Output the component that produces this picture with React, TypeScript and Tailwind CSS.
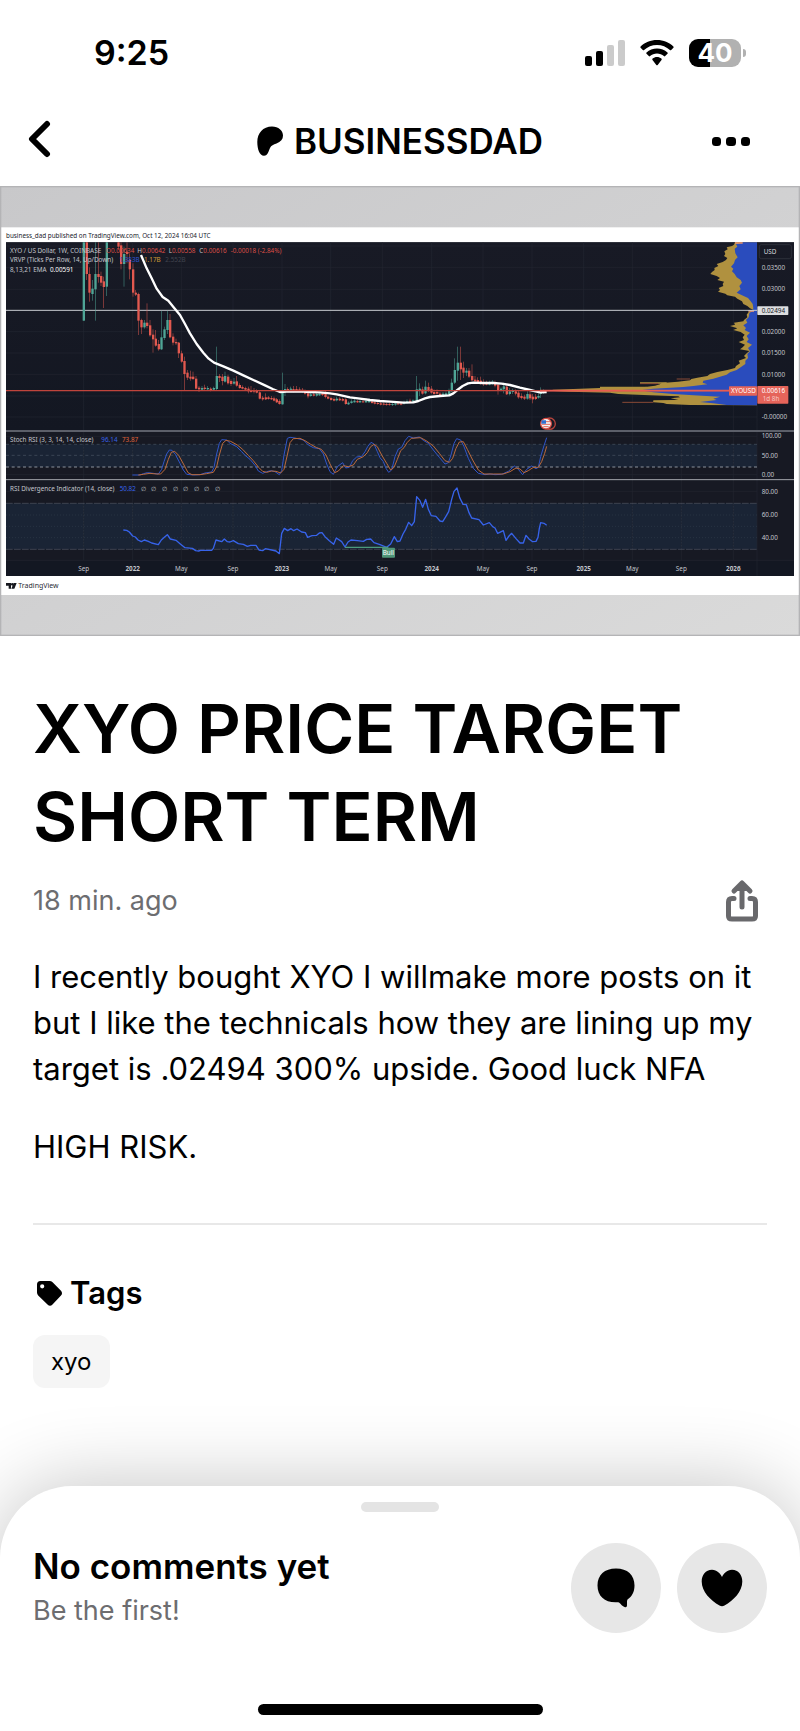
import React from "react";

type Point = [number, number];
// x, wick top, body top, body bottom, wick bottom, closed up
type Candle = [number, number, number, number, number, 0 | 1];

const candles: Candle[] = [
  [251, 187, 187, 422, 422, 1],
  [260, 187, 187, 282, 300, 0],
  [268, 262, 282, 338, 365, 0],
  [277, 300, 326, 342, 362, 1],
  [286, 187, 282, 328, 422, 1],
  [295, 187, 282, 291, 308, 0],
  [303, 275, 288, 308, 318, 0],
  [311, 290, 304, 321, 384, 0],
  [320, 187, 187, 320, 348, 1],
  [355, 187, 187, 200, 210, 0],
  [363, 187, 196, 252, 268, 0],
  [372, 200, 222, 252, 320, 1],
  [381, 187, 215, 222, 250, 0],
  [389, 220, 240, 268, 298, 0],
  [399, 250, 268, 338, 350, 0],
  [407, 330, 338, 344, 348, 0],
  [415, 338, 342, 422, 465, 0],
  [424, 416, 420, 442, 462, 0],
  [433, 420, 428, 442, 446, 1],
  [441, 370, 428, 438, 445, 0],
  [450, 420, 436, 466, 470, 0],
  [459, 448, 464, 478, 518, 0],
  [467, 450, 476, 497, 500, 0],
  [476, 480, 492, 508, 512, 0],
  [484, 392, 472, 508, 510, 1],
  [493, 440, 448, 474, 480, 1],
  [502, 392, 420, 450, 462, 1],
  [510, 402, 420, 472, 475, 0],
  [519, 460, 470, 488, 496, 0],
  [528, 476, 486, 490, 495, 0],
  [536, 486, 488, 520, 534, 0],
  [545, 512, 520, 545, 548, 0],
  [553, 530, 543, 582, 630, 0],
  [562, 570, 578, 593, 600, 0],
  [571, 572, 590, 596, 602, 0],
  [579, 575, 590, 597, 600, 0],
  [588, 588, 596, 626, 628, 0],
  [597, 618, 623, 628, 636, 0],
  [606, 618, 624, 629, 631, 1],
  [614, 614, 623, 627, 630, 0],
  [623, 618, 624, 628, 631, 1],
  [632, 622, 626, 631, 634, 0],
  [641, 620, 624, 629, 631, 1],
  [650, 500, 588, 627, 630, 1],
  [658, 582, 588, 594, 606, 0],
  [667, 582, 590, 603, 616, 0],
  [675, 575, 588, 605, 608, 1],
  [684, 584, 590, 610, 614, 0],
  [693, 598, 603, 612, 618, 0],
  [702, 594, 605, 611, 614, 1],
  [710, 588, 604, 617, 620, 0],
  [719, 610, 615, 624, 626, 0],
  [727, 616, 621, 626, 628, 0],
  [736, 620, 624, 629, 631, 0],
  [745, 620, 626, 634, 640, 0],
  [753, 618, 630, 636, 638, 0],
  [762, 624, 630, 635, 640, 0],
  [770, 628, 632, 638, 640, 0],
  [779, 634, 637, 656, 658, 0],
  [788, 648, 653, 658, 662, 0],
  [797, 640, 652, 658, 660, 0],
  [805, 648, 652, 657, 659, 0],
  [814, 648, 654, 658, 660, 0],
  [822, 650, 655, 662, 664, 0],
  [830, 654, 658, 667, 669, 0],
  [838, 658, 663, 672, 674, 0],
  [847, 578, 635, 673, 674, 1],
  [855, 612, 627, 635, 648, 1],
  [863, 622, 627, 634, 636, 0],
  [872, 620, 626, 633, 636, 1],
  [880, 618, 627, 635, 637, 0],
  [889, 618, 627, 632, 635, 0],
  [898, 622, 628, 633, 635, 0],
  [907, 624, 629, 635, 638, 0],
  [915, 628, 634, 641, 644, 0],
  [924, 630, 640, 649, 655, 0],
  [932, 638, 643, 648, 650, 1],
  [941, 636, 643, 647, 649, 0],
  [950, 638, 642, 647, 650, 1],
  [958, 634, 641, 646, 648, 1],
  [967, 636, 640, 645, 648, 0],
  [976, 632, 640, 651, 655, 0],
  [984, 646, 650, 656, 658, 0],
  [993, 650, 654, 660, 662, 0],
  [1002, 652, 657, 662, 664, 0],
  [1010, 650, 656, 661, 664, 1],
  [1019, 652, 656, 661, 663, 0],
  [1028, 653, 657, 662, 664, 0],
  [1037, 655, 658, 672, 674, 0],
  [1045, 664, 668, 673, 675, 1],
  [1054, 658, 664, 669, 671, 1],
  [1063, 657, 662, 667, 668, 1],
  [1072, 660, 663, 667, 669, 0],
  [1080, 659, 663, 667, 669, 1],
  [1089, 660, 664, 667, 669, 0],
  [1098, 654, 663, 667, 669, 1],
  [1107, 656, 662, 667, 668, 1],
  [1116, 660, 664, 669, 671, 0],
  [1124, 662, 667, 671, 673, 0],
  [1133, 664, 669, 672, 674, 0],
  [1142, 666, 670, 674, 676, 0],
  [1151, 667, 671, 674, 676, 0],
  [1159, 668, 672, 675, 677, 0],
  [1168, 669, 672, 675, 677, 0],
  [1177, 668, 672, 675, 678, 1],
  [1186, 664, 670, 674, 677, 1],
  [1194, 665, 670, 673, 675, 0],
  [1203, 667, 670, 674, 676, 0],
  [1212, 662, 667, 671, 674, 1],
  [1221, 658, 664, 669, 671, 1],
  [1230, 656, 662, 666, 669, 0],
  [1239, 658, 661, 666, 668, 1],
  [1250, 588, 628, 664, 666, 1],
  [1259, 610, 626, 632, 648, 1],
  [1267, 620, 628, 641, 644, 0],
  [1276, 602, 620, 640, 643, 1],
  [1285, 608, 621, 632, 636, 0],
  [1294, 618, 626, 638, 641, 0],
  [1302, 628, 636, 642, 644, 0],
  [1311, 628, 636, 641, 644, 0],
  [1320, 636, 641, 646, 648, 0],
  [1329, 636, 641, 645, 648, 1],
  [1338, 634, 640, 645, 648, 1],
  [1347, 626, 633, 645, 646, 1],
  [1355, 596, 608, 634, 636, 1],
  [1364, 535, 570, 608, 612, 1],
  [1373, 500, 548, 572, 602, 1],
  [1382, 500, 548, 568, 600, 0],
  [1390, 545, 563, 578, 594, 0],
  [1399, 564, 572, 578, 588, 1],
  [1407, 564, 572, 590, 594, 0],
  [1416, 553, 588, 601, 604, 0],
  [1425, 588, 599, 604, 608, 0],
  [1433, 592, 600, 608, 612, 0],
  [1442, 590, 602, 610, 614, 0],
  [1450, 598, 606, 613, 618, 0],
  [1459, 602, 609, 614, 616, 0],
  [1468, 602, 608, 614, 616, 1],
  [1477, 600, 605, 612, 614, 1],
  [1485, 602, 608, 617, 622, 0],
  [1494, 608, 614, 630, 644, 0],
  [1503, 622, 626, 631, 634, 1],
  [1511, 608, 619, 628, 640, 1],
  [1520, 616, 620, 643, 645, 0],
  [1529, 624, 634, 642, 646, 1],
  [1538, 626, 632, 636, 642, 1],
  [1547, 628, 634, 641, 646, 0],
  [1555, 632, 638, 652, 656, 0],
  [1564, 640, 648, 654, 658, 0],
  [1573, 644, 650, 656, 660, 0],
  [1582, 634, 642, 656, 659, 1],
  [1590, 636, 643, 655, 660, 0],
  [1598, 642, 650, 658, 670, 0],
  [1607, 642, 650, 657, 660, 0],
  [1615, 640, 648, 653, 656, 1],
  [1622, 622, 634, 642, 654, 1],
  [1631, 628, 634, 639, 642, 1],
];

const ema: Point[] = [
  [423, 225], [440, 265], [455, 295], [470, 326], [488, 351], [505, 362], [522, 383], [540, 405],
  [555, 432], [570, 460], [590, 492], [610, 518], [626, 536], [642, 548], [670, 559], [700, 572],
  [730, 586], [760, 600], [795, 616], [818, 627], [840, 636], [860, 635], [900, 634], [930, 636],
  [960, 637], [990, 640], [1010, 643], [1050, 652], [1080, 656], [1110, 660], [1140, 663],
  [1170, 665], [1210, 668], [1240, 667], [1255, 663], [1275, 655], [1290, 651], [1320, 648],
  [1348, 646], [1360, 640], [1372, 630], [1388, 618], [1404, 610], [1420, 608], [1450, 609],
  [1480, 609], [1505, 611], [1530, 615], [1560, 623], [1590, 630], [1620, 637], [1640, 636],
];

const stochK: Point[] = [
  [397, 885], [420, 885], [430, 881], [442, 878], [460, 880], [475, 882], [485, 868], [492, 845],
  [500, 822], [508, 810], [516, 811], [526, 823], [540, 850], [550, 870], [560, 883], [580, 885],
  [600, 884], [615, 879], [635, 876], [642, 862], [650, 822], [658, 790], [665, 779], [680, 780],
  [690, 790], [710, 800], [725, 815], [735, 826], [750, 838], [765, 856], [775, 873], [788, 880],
  [800, 875], [812, 872], [825, 875], [838, 884], [845, 872], [852, 825], [862, 775], [870, 772],
  [885, 774], [910, 780], [925, 795], [940, 803], [958, 806], [970, 822], [980, 852], [990, 875],
  [1000, 883], [1012, 860], [1028, 848], [1037, 864], [1048, 862], [1058, 842], [1070, 831],
  [1085, 829], [1095, 815], [1103, 800], [1113, 787], [1122, 792], [1132, 815], [1140, 833],
  [1150, 845], [1158, 865], [1166, 877], [1175, 870], [1185, 830], [1195, 807], [1205, 802],
  [1215, 782], [1226, 769], [1240, 774], [1258, 771], [1270, 781], [1285, 790], [1300, 810],
  [1318, 832], [1335, 852], [1345, 848], [1353, 825], [1362, 790], [1370, 776], [1382, 780],
  [1392, 800], [1405, 835], [1420, 865], [1435, 880], [1455, 884], [1470, 882], [1485, 884],
  [1505, 883], [1525, 874], [1543, 858], [1555, 868], [1568, 884], [1580, 868], [1595, 858],
  [1608, 866], [1615, 862], [1622, 830], [1632, 797], [1640, 773],
];

const stochD: Point[] = [
  [415, 885], [430, 883], [450, 880], [470, 882], [482, 882], [495, 868], [505, 838], [514, 817],
  [524, 814], [536, 826], [552, 855], [564, 878], [576, 884], [600, 884], [620, 881], [640, 877],
  [650, 860], [658, 825], [668, 790], [678, 781], [692, 784], [712, 795], [728, 808], [745, 826],
  [760, 842], [776, 862], [788, 874], [800, 877], [815, 873], [828, 874], [842, 879], [852, 868],
  [862, 825], [870, 788], [880, 776], [900, 775], [915, 782], [932, 793], [950, 803], [964, 808],
  [978, 825], [990, 852], [1004, 878], [1015, 873], [1030, 857], [1045, 860], [1060, 855],
  [1072, 838], [1090, 830], [1102, 818], [1112, 800], [1122, 793], [1132, 800], [1145, 825],
  [1160, 850], [1172, 870], [1182, 862], [1192, 838], [1202, 812], [1212, 803], [1222, 787],
  [1234, 775], [1262, 773], [1280, 783], [1300, 798], [1318, 820], [1335, 842], [1348, 847],
  [1358, 835], [1368, 805], [1378, 786], [1390, 785], [1402, 808], [1418, 840], [1435, 870],
  [1452, 882], [1480, 882], [1510, 882], [1530, 875], [1548, 864], [1560, 867], [1572, 878],
  [1585, 872], [1600, 862], [1615, 862], [1625, 845], [1634, 820], [1640, 799],
];

const rsi: Point[] = [
  [370, 1050], [380, 1051], [388, 1056], [398, 1068], [406, 1071], [414, 1080], [424, 1085],
  [433, 1080], [445, 1084], [455, 1089], [475, 1094], [484, 1080], [493, 1072], [502, 1064],
  [511, 1077], [528, 1081], [540, 1091], [555, 1103], [577, 1105], [587, 1112], [596, 1113],
  [602, 1111], [635, 1111], [640, 1105], [648, 1080], [665, 1085], [673, 1077], [682, 1085],
  [690, 1086], [700, 1082], [715, 1091], [730, 1093], [742, 1099], [752, 1096], [768, 1096],
  [777, 1110], [788, 1112], [796, 1106], [815, 1110], [828, 1113], [838, 1121], [845, 1060],
  [853, 1045], [863, 1052], [873, 1046], [881, 1052], [891, 1047], [905, 1056], [916, 1058],
  [923, 1072], [936, 1067], [950, 1066], [958, 1059], [966, 1058], [975, 1070], [988, 1082],
  [1001, 1093], [1009, 1074], [1025, 1085], [1035, 1101], [1044, 1086], [1053, 1080],
  [1072, 1082], [1090, 1084], [1100, 1078], [1112, 1077], [1122, 1088], [1140, 1094],
  [1160, 1102], [1172, 1092], [1183, 1070], [1192, 1085], [1200, 1083], [1209, 1062],
  [1217, 1048], [1226, 1027], [1235, 1037], [1243, 1025], [1250, 950], [1260, 962], [1268, 982],
  [1277, 958], [1285, 988], [1294, 1007], [1308, 1009], [1320, 1023], [1328, 1025], [1336, 1012],
  [1346, 995], [1355, 958], [1362, 934], [1371, 924], [1379, 953], [1389, 973], [1399, 974],
  [1407, 998], [1415, 1014], [1437, 1019], [1450, 1035], [1468, 1028], [1478, 1040],
  [1485, 1044], [1493, 1060], [1510, 1052], [1518, 1081], [1527, 1068], [1535, 1060],
  [1548, 1076], [1560, 1089], [1570, 1089], [1578, 1066], [1587, 1077], [1598, 1085],
  [1608, 1084], [1614, 1072], [1618, 1045], [1622, 1028], [1632, 1030], [1640, 1036],
];

const volumeDown: Point[] = [
  [2205, 187], [2202, 194], [2196, 198], [2180, 202], [2183, 208], [2173, 214], [2176, 222],
  [2172, 228], [2182, 234], [2178, 240], [2168, 246], [2150, 252], [2155, 258], [2143, 264],
  [2144, 270], [2136, 276], [2131, 282], [2150, 288], [2160, 294], [2152, 300], [2172, 305],
  [2168, 312], [2170, 318], [2156, 324], [2160, 330], [2154, 335], [2176, 341], [2182, 346],
  [2205, 350], [2212, 356], [2226, 364], [2230, 372], [2242, 378], [2250, 385], [2262, 391],
  [2246, 396], [2240, 404], [2242, 412], [2232, 420], [2230, 424], [2202, 428], [2205, 434],
  [2190, 438], [2212, 445], [2200, 450], [2222, 456], [2234, 464], [2228, 472], [2232, 480],
  [2216, 486], [2235, 494], [2228, 502], [2220, 508], [2248, 513], [2240, 520], [2232, 528],
  [2238, 534], [2216, 542], [2220, 550], [2208, 558], [2205, 564], [2182, 570], [2152, 576],
  [2130, 582], [2122, 588], [2092, 593], [2074, 597], [2070, 601], [2034, 605], [1985, 609],
  [1980, 613], [1965, 617], [1935, 621], [1800, 624], [1720, 627], [1660, 629], [1645, 632],
  [1705, 635], [1830, 638], [1855, 642], [1950, 646], [2035, 649], [2040, 652], [2012, 655],
  [2035, 659], [1960, 663], [1960, 667], [1990, 669], [2000, 672], [2070, 675],
];

const volumeUp: Point[] = [
  [2230, 187], [2208, 192], [2212, 200], [2204, 206], [2206, 220], [2213, 232], [2205, 240],
  [2202, 250], [2193, 260], [2200, 266], [2196, 274], [2204, 282], [2210, 292], [2222, 300],
  [2226, 308], [2218, 318], [2222, 328], [2210, 338], [2226, 346], [2244, 354], [2252, 364],
  [2258, 372], [2260, 384], [2258, 392], [2248, 400], [2246, 412], [2238, 420], [2242, 428],
  [2230, 436], [2238, 444], [2234, 450], [2250, 458], [2240, 468], [2246, 478], [2240, 486],
  [2256, 494], [2244, 504], [2250, 514], [2242, 522], [2244, 534], [2236, 542], [2236, 552],
  [2222, 562], [2210, 570], [2190, 577], [2180, 584], [2160, 590], [2140, 596], [2110, 602],
  [2108, 608], [2122, 613], [2080, 618], [2050, 621], [1960, 626], [1920, 631], [1960, 637],
  [2020, 642], [2080, 646], [2160, 650], [2140, 656], [2150, 660], [2100, 666], [2140, 670],
  [2180, 675],
];

const timeMarks: { x: number; label: string; bold?: boolean }[] = [
  { x: 251, label: "Sep" },
  { x: 398, label: "2022", bold: true },
  { x: 544, label: "May" },
  { x: 699, label: "Sep" },
  { x: 846, label: "2023", bold: true },
  { x: 992, label: "May" },
  { x: 1147, label: "Sep" },
  { x: 1295, label: "2024", bold: true },
  { x: 1449, label: "May" },
  { x: 1596, label: "Sep" },
  { x: 1751, label: "2025", bold: true },
  { x: 1897, label: "May" },
  { x: 2044, label: "Sep" },
  { x: 2200, label: "2026", bold: true },
];

const priceMarks = [
  { y: 262, label: "0.03500" },
  { y: 327, label: "0.03000" },
  { y: 455, label: "0.02000" },
  { y: 518, label: "0.01500" },
  { y: 583, label: "0.01000" },
  { y: 711, label: "-0.00000" },
  { y: 768, label: "100.00" },
  { y: 826, label: "50.00" },
  { y: 884, label: "0.00" },
  { y: 934, label: "80.00" },
  { y: 1003, label: "60.00" },
  { y: 1072, label: "40.00" },
];

const toPoints = (points: Point[]) => points.map((p) => p.join(",")).join(" ");

// closes the outline of a volume profile against the price axis
const toProfile = (points: Point[]) => `2271,187 ${toPoints(points)} 2271,676`;

const PriceChart = () => (
  <svg
    viewBox="0 18 2400 1350"
    className="block w-full font-['Noto_Sans','Open_Sans',sans-serif]"
    role="img"
    aria-label="XYO / US Dollar weekly chart"
  >
    <defs>
      <linearGradient id="backdrop" x1="0" y1="0" x2="1" y2="1">
        <stop offset="0" stopColor="#c8c8ca" />
        <stop offset="1" stopColor="#dadada" />
      </linearGradient>
      <linearGradient id="panel" x1="0" y1="0" x2="0" y2="1">
        <stop offset="0" stopColor="#181a25" />
        <stop offset="1" stopColor="#131722" />
      </linearGradient>
    </defs>
    <rect x="0" y="18" width="2400" height="1350" fill="url(#backdrop)" />
    <rect x="2" y="20" width="2396" height="1346" fill="none" stroke="#b4b4b6" strokeWidth="4" />
    <rect x="4" y="142" width="2392" height="1103" fill="#fff" />
    <text x="18" y="174" fontSize="19" fill="#20222c">
      business_dad published on TradingView.com, Oct 12, 2024 16:04 UTC
    </text>

    <rect x="18" y="187" width="2364" height="1001" fill="#131722" />
    <rect x="18" y="187" width="2364" height="563" fill="url(#panel)" />
    <rect x="18" y="756" width="2364" height="142" fill="#171923" />
    <rect x="18" y="902" width="2364" height="240" fill="#171923" />
    <rect x="18" y="793" width="2253" height="68" fill="#1a2435" />
    <rect x="18" y="970" width="2253" height="138" fill="#1a2435" />

    {timeMarks.map((mark) => (
      <g key={mark.x} stroke="#222531" strokeWidth="2">
        <path d={`M${mark.x} 187V1141`} />
        <path d={`M${mark.x} 793V861M${mark.x} 970V1108`} stroke="#33404f" strokeDasharray="3 6" />
      </g>
    ))}
    <path
      d="M18 198H2271M18 262H2271M18 328H2271M18 455H2271M18 519H2271M18 583H2271M18 648H2271M18 711H2271M18 769H2271M18 884H2271M18 934H2271M18 1141H2382M2271 187V1188"
      stroke="#222531"
      strokeWidth="2"
    />

    <polygon points={toProfile(volumeDown)} fill="#b0913f" />
    <polygon points={toProfile(volumeUp)} fill="#2a4cbd" />
    <path d="M1920 609H2000M1800 622H1940M1960 663H2030" stroke="#b0913f" strokeWidth="4" />
    <path d="M2205 187H2228V191H2205ZM2245 390H2262V395H2245Z" fill="#e79272" />
    <path d="M1920 611H1975M2030 597H2070M1867 667H1960" stroke="#8a4a36" strokeWidth="3" />

    <path d="M18 391H2271" stroke="#c9ccd1" strokeWidth="3" />

    {candles.map(([x, high, top, bottom, low, up]) => (
      <g key={x} fill={up ? "#4fa596" : "#e2594f"}>
        <rect x={x - 1} y={high} width="2" height={low - high} opacity="0.75" />
        <rect x={x - 3} y={top} width="7" height={bottom - top} />
      </g>
    ))}
    <polyline points={toPoints(ema)} fill="none" stroke="#fff" strokeWidth="7" strokeLinejoin="round" />
    <path d="M18 632H2271" stroke="#c0443c" strokeWidth="4" />
    <path d="M1620 632H2200" stroke="#e85c52" strokeWidth="5" />

    <g>
      <circle cx="1649" cy="731" r="17" fill="#171923" stroke="#b5443d" strokeWidth="4" />
      <circle cx="1638" cy="731" r="16" fill="#f3f3f3" stroke="#d8483f" strokeWidth="4" />
      <path d="M1626 725H1650M1626 733H1650M1630 740H1646" stroke="#df6a62" strokeWidth="3" />
      <path d="M1625 721H1638V731H1624Z" fill="#2f6fd0" />
    </g>

    <path d="M18 753H2382" stroke="#5c5f69" strokeWidth="6" />
    <path d="M18 899H2382" stroke="#a4a6ac" strokeWidth="3" />

    <path d="M18 793H2271M18 826H2271" stroke="#4a5462" strokeWidth="2" strokeDasharray="9 8" />
    <path d="M18 861H2271" stroke="#8b919b" strokeWidth="3" strokeDasharray="9 8" />
    <path d="M18 970H2271M18 1108H2271" stroke="#515561" strokeWidth="2" strokeDasharray="20 4" />
    <path d="M18 1005H2271M18 1039H2271M18 1073H2271" stroke="#2f3b4a" strokeWidth="2" strokeDasharray="3 6" />

    <g fill="none" strokeLinejoin="round">
      <polyline points={toPoints(stochK)} stroke="#3055c8" strokeWidth="3" />
      <polyline points={toPoints(stochD)} stroke="#bb6a3c" strokeWidth="3" />
      <polyline points={toPoints(rsi)} stroke="#3763ea" strokeWidth="4" />
    </g>
    <path d="M1035 1102H1165" stroke="#4c9a7c" strokeWidth="4" />
    <rect x="1146" y="1103" width="39" height="30" rx="3" fill="#4f9578" />
    <text x="1165" y="1125" fontSize="19" textAnchor="middle" fill="#fff">
      Bull
    </text>

    <g fontSize="19" fill="#c4c6cc">
      <text x="30" y="220">
        XYO / US Dollar, 1W, COINBASE
      </text>
      <g fill="#dc4f47">
        <text x="318" y="220">O0.00634</text>
        <text x="412" y="220">
          <tspan fill="#c4c6cc">H</tspan>0.00642
        </text>
        <text x="506" y="220">
          <tspan fill="#c4c6cc">L</tspan>0.00558
        </text>
        <text x="598" y="220">
          <tspan fill="#c4c6cc">C</tspan>0.00616
        </text>
        <text x="692" y="220">-0.00018 (-2.84%)</text>
      </g>
      <text x="30" y="247">
        VRVP (Ticks Per Row, 14, Up/Down)
      </text>
      <text x="358" y="247" fill="#2f57d6">
        1.383B
      </text>
      <text x="432" y="247" fill="#d39b35">
        1.17B
      </text>
      <text x="496" y="247" fill="#42454f">
        2.552B
      </text>
      <text x="30" y="275">
        8,13,21 EMA
      </text>
      <text x="150" y="275" fill="#fff">
        0.00591
      </text>
      <text x="30" y="786">
        Stoch RSI (3, 3, 14, 14, close)
      </text>
      <text x="304" y="786" fill="#3763ea">
        96.14
      </text>
      <text x="366" y="786" fill="#e2663a">
        73.87
      </text>
      <text x="30" y="932">
        RSI Divergence Indicator (14, close)
      </text>
      <text x="359" y="932" fill="#3763ea">
        50.82
      </text>
      {[429, 461, 493, 525, 557, 589, 620, 652].map((x) => (
        <text key={x} x={x} y="932" textAnchor="middle">
          ∅
        </text>
      ))}
      {timeMarks.map((mark) => (
        <text key={mark.x} x={mark.x} y="1173" textAnchor="middle" fontWeight={mark.bold ? 700 : 400}>
          {mark.label}
        </text>
      ))}
      {priceMarks.map((mark) => (
        <text key={mark.y} x="2285" y={mark.y + 7}>
          {mark.label}
        </text>
      ))}
    </g>

    <rect x="2278" y="194" width="96" height="42" rx="6" fill="none" stroke="#363944" strokeWidth="2" />
    <text x="2291" y="221" fontSize="19" fill="#d5d7dc">
      USD
    </text>
    <rect x="2272" y="379" width="93" height="26" rx="2" fill="#dcdddf" />
    <text x="2285" y="399" fontSize="19" fill="#14161d">
      0.02494
    </text>
    <rect x="2187" y="619" width="84" height="28" rx="2" fill="#e5645a" />
    <text x="2193" y="640" fontSize="19" fill="#fff">
      XYOUSD
    </text>
    <rect x="2272" y="618" width="93" height="53" rx="2" fill="#e5645a" />
    <text x="2285" y="640" fontSize="19" fill="#fff">
      0.00616
    </text>
    <text x="2288" y="664" fontSize="19" fill="#f7c9c5">
      1d 8h
    </text>

    <path d="M18 1209H33V1226H26V1217H18ZM41 1209H50L43 1226H34Z" fill="#16181f" />
    <circle cx="37" cy="1213" r="4" fill="#16181f" />
    <text x="55" y="1225" fontSize="21" fill="#2a2c35">
      TradingView
    </text>
  </svg>
);

const StatusBar = () => (
  <div className="flex h-[106px] items-center justify-between pl-[94px] pr-[54px]">
    <span className="text-[34px] leading-[44px] font-semibold">9:25</span>
    <div className="flex items-center gap-[15px]">
      <svg width="40" height="28" viewBox="0 0 40 28" aria-label="Signal">
        <rect x="0" y="17" width="7" height="10" rx="2" />
        <rect x="11" y="12" width="7" height="15" rx="2" />
        <rect x="22" y="6" width="7" height="21" rx="2" fill="#cbcbcb" />
        <rect x="33" y="1" width="7" height="26" rx="2" fill="#cbcbcb" />
      </svg>
      <svg width="34" height="28" viewBox="0 0 34 28" aria-label="Wi-Fi">
        <path d="M17 1C23.5 1 29.300 3.500 33.400 7.500C33.800 7.900 33.800 8.400 33.400 8.800L31.200 11C30.800 11.400 30.300 11.400 29.900 11C26.500 7.800 22 5.900 17 5.900C12 5.900 7.500 7.800 4.100 11C3.700 11.400 3.200 11.400 2.800 11L.6 8.800C.2 8.400 .2 7.900 .6 7.500C4.700 3.500 10.500 1 17 1Z" />
        <path d="M17 9.500C21 9.500 24.700 11 27.500 13.500C27.900 13.900 27.900 14.400 27.500 14.800L25.200 17.100C24.800 17.500 24.300 17.500 23.900 17.100C22.100 15.400 19.700 14.400 17 14.400C14.300 14.400 11.900 15.400 10.100 17.100C9.700 17.500 9.200 17.500 8.800 17.100L6.500 14.800C6.100 14.400 6.100 13.900 6.500 13.500C9.300 11 13 9.500 17 9.500Z" />
        <path d="M17 18C18.700 18 20.200 18.600 21.400 19.600C21.900 20 21.900 20.500 21.500 20.900L17.700 25.900C17.300 26.300 16.700 26.300 16.300 25.900L12.500 20.900C12.100 20.500 12.100 20 12.600 19.600C13.800 18.600 15.300 18 17 18Z" />
      </svg>
      <div className="flex items-center gap-[2px]">
        <div className="flex h-[28px] w-[52px] items-center justify-center rounded-[9px] bg-linear-to-r from-black from-41% to-[#b1b1b1] to-41% text-[26px] leading-[28px] font-bold text-white">
          40
        </div>
        <span className="h-[8px] w-[3px] rounded-r-full bg-[#b1b1b1]" />
      </div>
    </div>
  </div>
);

const Header = () => (
  <header className="flex h-[80px] items-start justify-between px-[28px] pt-[12px]">
    <button type="button" aria-label="Back" className="flex h-[42px] w-[60px] items-center">
      <svg width="24" height="38" viewBox="0 0 24 38" fill="none">
        <path d="M19 4L4 19L19 34" stroke="#000" strokeWidth="6" strokeLinecap="round" strokeLinejoin="round" />
      </svg>
    </button>
    <a href="#creator" className="flex items-center gap-[11px]">
      <svg width="26" height="30" viewBox="0 0 26 30">
        <path d="M26 9.500C26 4.500 21.500 .5 15 .5C6 .5 .3 7 .3 16C.3 23 2.500 29.700 7 29.700C11 29.700 11.500 25 13 22C14.200 19.300 16.500 18.600 19.500 17.500C23.800 15.900 26 13.300 26 9.500Z" />
      </svg>
      <span className="text-[35px] leading-[46px] font-semibold">BUSINESSDAD</span>
    </a>
    <button type="button" aria-label="More" className="flex h-[48px] w-[60px] items-center justify-end pr-[22px]">
      <svg width="38" height="10" viewBox="0 0 38 10" className="shrink-0">
        <rect x="0" y="0" width="9" height="9" rx="3.500" />
        <rect x="14" y="0" width="10" height="9" rx="3.500" />
        <rect x="29" y="0" width="9" height="9" rx="3.500" />
      </svg>
    </button>
  </header>
);

const Post = () => (
  <article className="px-[33px] pt-[48px]">
    <h1 className="text-[68px] leading-[88px] font-semibold">
      XYO PRICE TARGET
      <br />
      SHORT TERM
    </h1>
    <div className="mt-[19px] flex items-center justify-between pr-[8px]">
      <p className="text-[27px] leading-[44px] text-[#6d6d70]">18 min. ago</p>
      <button type="button" aria-label="Share">
        <svg width="34" height="44" viewBox="0 0 34 44" fill="none" stroke="#69696c" strokeWidth="5" strokeLinecap="round" strokeLinejoin="round">
          <path d="M9 19.500H7Q3.500 19.500 3.500 23V37Q3.500 40 7 40H27Q30.500 40 30.500 37V23Q30.500 19.500 27 19.500H25" />
          <path d="M17 28V6M9 12L17 4L25 12" />
          <path d="M17 4L11 11H23Z" fill="#69696c" strokeWidth="2" />
        </svg>
      </button>
    </div>
    <div className="mt-[31px] flex flex-col gap-[32px] text-[31px] leading-[46px]">
      <p>
        I recently bought XYO I willmake more posts on it
        <br />
        but I like the technicals how they are lining up my
        <br />
        target is .02494 300% upside. Good luck NFA
      </p>
      <p>HIGH RISK.</p>
    </div>
    <hr className="mt-[53px] border-t-2 border-[#e8e8e8]" />
    <section className="mt-[46px]">
      <h2 className="flex items-center gap-[8px] pl-[4px] text-[31px] leading-[44px] font-semibold">
        <svg width="25" height="25" viewBox="0 0 25 25">
          <path
            fillRule="evenodd"
            d="M3.500 0H12.500Q14.300 0 15.600 1.200L24 9.700Q26 12.200 24 14.600L15.500 23.600Q13 26 10.500 23.600L1.200 14.500Q0 13.200 0 11.500V3.500Q0 0 3.500 0ZM5.200 3.200A2.100 2.100 0 1 0 5.200 7.400A2.100 2.100 0 1 0 5.200 3.200Z"
          />
        </svg>
        Tags
      </h2>
      <div className="mt-[20px] flex">
        <a href="#xyo" className="rounded-[12px] bg-[#f5f5f5] px-[18px] py-[10px] text-[24px] leading-[33px]">
          xyo
        </a>
      </div>
    </section>
  </article>
);

const CommentSheet = () => (
  <footer className="mt-auto flex flex-col items-center rounded-t-[72px] bg-white px-[33px] pt-[16px] pb-[16px] shadow-[0_0_80px_rgba(0,0,0,0.24)]">
    <span className="h-[10px] w-[78px] rounded-full bg-[#e4e4e4]" />
    <div className="mt-[31px] flex w-full items-center justify-between">
      <div>
        <p className="text-[35px] leading-[46px] font-semibold">No comments yet</p>
        <p className="text-[27px] leading-[44px] text-[#6d6d70]">Be the first!</p>
      </div>
      <div className="flex gap-[16px]">
        <button type="button" aria-label="Comment" className="flex size-[90px] items-center justify-center rounded-full bg-[#e7e7e7]">
          <svg width="38" height="40" viewBox="0 0 38 40">
            <path d="M19 .5C30.500 .5 37.500 7 37.500 17.500C37.500 24 35 28.500 30.500 31.500C29.800 32.500 30 35 30 37.500Q30 39.800 27.500 39C25.500 38.500 24 36 22 34.500C21 34.200 20 34.300 18.500 34.300C7.500 34.300 .5 28 .5 17.500C.5 7 7.500 .5 19 .5Z" />
          </svg>
        </button>
        <button type="button" aria-label="Like" className="flex size-[90px] items-center justify-center rounded-full bg-[#e7e7e7]">
          <svg width="42" height="38" viewBox="0 0 42 38">
            <path d="M21 8C22.500 5 26 .8 31 .8C37.500 .8 41.300 6 41.300 12.500C41.300 22.500 32.500 31.500 23.500 36.500Q21 37.800 18.500 36.500C9.500 31.500 .7 22.500 .7 12.500C.7 6 4.500 .8 11 .8C16 .8 19.500 5 21 8Z" />
          </svg>
        </button>
      </div>
    </div>
    <span className="mt-[71px] h-[11px] w-[285px] rounded-full bg-black" />
  </footer>
);

export default function App() {
  return (
    <div className="flex min-h-screen flex-col overflow-hidden bg-white font-['Inter','Liberation_Sans',sans-serif] text-black">
      <StatusBar />
      <Header />
      <PriceChart />
      <Post />
      <CommentSheet />
    </div>
  );
}
